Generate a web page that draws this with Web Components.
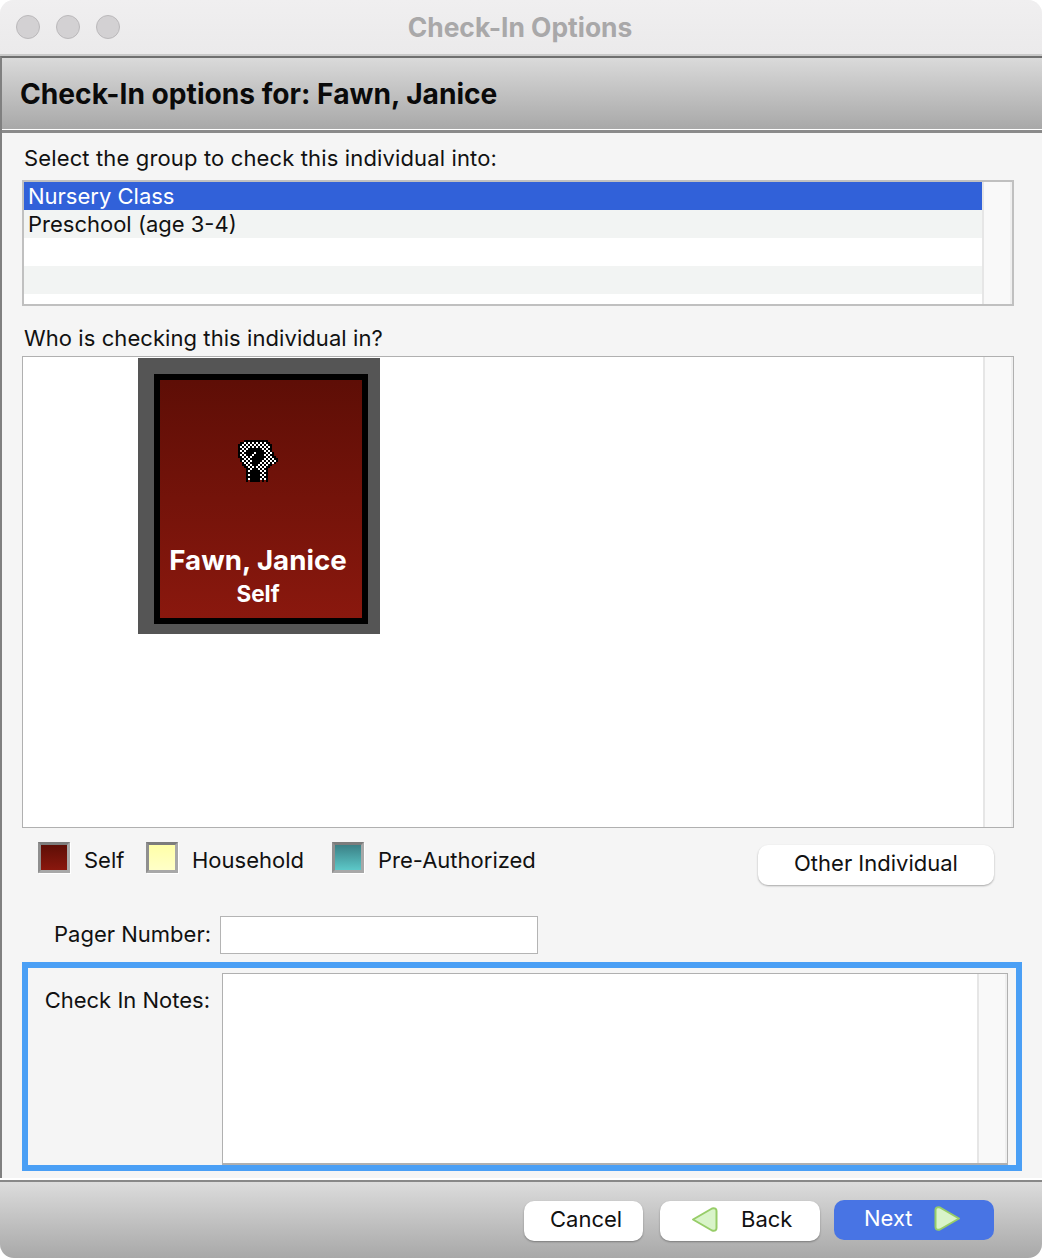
<!DOCTYPE html>
<html><head><meta charset="utf-8"><style>
html,body{margin:0;background:#fff;}
body{font-family:Inter,"Liberation Sans",sans-serif;font-size:22px;color:#111;}
</style></head><body>
<app-window>
  <title-bar slot="title">Check-In Options</title-bar>
  <head-band slot="head">Check-In options for: Fawn, Janice</head-band>
  <field-label style="margin-top:12px;letter-spacing:.14px">Select the group to check this individual into:</field-label>
  <group-list style="margin-top:9px">
    <list-row selected>Nursery Class</list-row>
    <list-row alt>Preschool (age 3-4)</list-row>
    <list-row></list-row>
    <list-row alt></list-row>
  </group-list>
  <field-label style="margin-top:19px;letter-spacing:.07px">Who is checking this individual in?</field-label>
  <scroll-box style="margin-top:5px;height:472px">
    <person-card name="Fawn, Janice" relation="Self"></person-card>
  </scroll-box>
  <legend-row style="margin-top:14px">
    <legend-item style="--a:#5e0e06;--b:#8a180e">Self</legend-item>
    <legend-item style="--a:#ffffa8;--b:#ffffc8">Household</legend-item>
    <legend-item style="--a:#3b8086;--b:#5cc8c8">Pre-Authorized</legend-item>
    <mac-button slot="action" style="width:236px;margin-top:3px">Other Individual</mac-button>
  </legend-row>
  <pager-row style="margin-top:31px">Pager Number:</pager-row>
  <notes-box>Check In Notes:</notes-box>
  <foot-bar slot="foot">
    <mac-button style="width:119px;margin-top:1px;--pl:26px;--jc:flex-start">Cancel</mac-button>
    <mac-button style="width:160px;margin-top:1px;margin-left:17px;--pl:31px;--jc:flex-start" arrow="left">Back</mac-button>
    <mac-button style="width:160px;margin-left:14px;--pl:30px;--jc:flex-start;--gap:20px" arrow="right" primary>Next</mac-button>
  </foot-bar>
</app-window>
<script>
function def(name, css, html, init){
  customElements.define(name, class extends HTMLElement{
    constructor(){super();this.attachShadow({mode:'open'}).innerHTML='<style>'+css+'</style>'+html;}
    connectedCallback(){ if(init) init(this, this.shadowRoot); }
  });
}
const SB='flex:none;width:30px;box-sizing:border-box;background:#f9f9f9;border-left:2px solid #e6e6e6;border-right:2px solid #efefef;';
def('app-window',
 `:host{display:flex;flex-direction:column;width:1042px;height:1258px;border-radius:14px;overflow:hidden;background:#f5f5f5;}
  .body{flex:1;display:flex;flex-direction:column;padding:0 28px 0 20px;border-left:2px solid #808080;min-height:0;}`,
 `<slot name="title"></slot><slot name="head"></slot><div class="body"><slot></slot></div><slot name="foot"></slot>`);
def('title-bar',
 `:host{display:flex;align-items:center;position:relative;height:54px;flex:none;background:linear-gradient(#f0eff0,#ebeaeb);border-bottom:2px solid #c9c9c9;box-sizing:content-box;}
  .dots{display:flex;gap:16px;padding-left:16px;}
  i{display:block;width:24px;height:24px;box-sizing:border-box;border-radius:50%;background:#d3d1d3;border:1px solid #bbb9bb;}
  .t{position:absolute;left:0;right:2px;top:11px;text-align:center;font-weight:700;font-size:26.4px;line-height:32px;color:#a9a8a9;}`,
 `<div class="dots"><i></i><i></i><i></i></div><div class="t"><slot></slot></div>`);
def('head-band',
 `:host{display:block;flex:none;box-sizing:border-box;height:77px;border-top:2px solid #6f6f6f;border-left:2px solid #808080;background:linear-gradient(#dadada 0,#a8a8a8 71px,#fff 71px,#fff 72px,#8a8a8a 72px);}
  .t{padding:16px 0 0 18px;font-weight:700;font-size:28.15px;line-height:40px;color:#0a0a0a;}`,
 `<div class="t"><slot></slot></div>`);
def('field-label',
 `:host{display:block;line-height:26px;font-size:22px;margin-left:2px;}`,
 `<slot></slot>`);
def('group-list',
 `:host{display:flex;height:126px;box-sizing:border-box;border:2px solid #c0c0c0;background:#fff;overflow:hidden;}
  .rows{flex:1;}
  .sb{${SB}}`,
 `<div class="rows"><slot></slot></div><div class="sb"></div>`);
def('list-row',
 `:host{display:block;height:28px;line-height:28px;padding-left:4px;font-size:22px;background:#fff;color:#111;}
  :host([alt]){background:#f2f4f3;}
  :host([selected]){background:#3161d9;color:#fff;}`,
 `<slot></slot>`);
def('scroll-box',
 `:host{display:flex;box-sizing:border-box;border:1px solid #b0b0b0;background:#fff;overflow:hidden;}
  .v{flex:1;padding:1px 0 0 115px;}
  .sb{${SB}}`,
 `<div class="v"><slot></slot></div><div class="sb"></div>`);
def('pixel-icon',
 `:host{display:block;width:44px;height:48px;} svg{display:block}`,
 `<svg width="44" height="48" viewBox="0 0 22 24" shape-rendering="crispEdges"></svg>`,
 (el,root)=>{
  const bounds={1:[4,15],2:[2,16],3:[1,17],4:[1,17],5:[1,17],6:[1,17],7:[1,18],8:[1,18],9:[1,19],10:[2,20],11:[2,20],12:[3,19],13:[3,17],14:[4,16],15:[5,15],16:[5,15],17:[5,15],18:[5,15],19:[5,15],20:[5,15],21:[4,15]};
  const q={5:[[6,12]],6:[[5,13]],7:[[5,7],[10,13]],8:[[5,7],[10,13]],9:[[9,13]],10:[[8,12]],11:[[8,11]],12:[[8,10]],13:[[8,10]],15:[[8,10]],16:[[7,11]],17:[[7,11]],18:[[7,11]],19:[[7,11]],20:[[7,11]]};
  let s='';
  for(const r in bounds){
    const [L,R]=bounds[r], y=+r;
    for(let x=L;x<=R;x++){
      if(y===21&&(x<7||x>11)&&(x%2===0)) continue;
      const edge=x===L||x===R||y===1||y===21;
      const inQ=(q[y]||[]).some(([a,b])=>x>=a&&x<=b);
      const white=!edge&&!inQ&&((x+y)%2===0);
      s+=`<rect x="${x}" y="${y}" width="1" height="1" fill="${white?'#fff':'#000'}"/>`;
    }
  }
  root.querySelector('svg').innerHTML=s;
 });
def('person-card',
 `:host{display:block;box-sizing:border-box;width:242px;height:276px;padding:16px 12px 10px 16px;background:#555;}
  .c{box-sizing:border-box;height:250px;border:6px solid #000;background:linear-gradient(#5e0e06,#8a180e);display:flex;flex-direction:column;align-items:center;padding:58px 6px 0 0;color:#fff;font-weight:700;}
  .n{margin-top:56px;font-size:27.7px;line-height:36px;white-space:nowrap;}
  .r{font-size:22.5px;line-height:30px;margin-top:1px;}`,
 `<div class="c"><pixel-icon></pixel-icon><div class="n"></div><div class="r"></div></div>`,
 (el,root)=>{root.querySelector('.n').textContent=el.getAttribute('name');root.querySelector('.r').textContent=el.getAttribute('relation');});
def('legend-row',
 `:host{display:flex;height:43px;padding-left:16px;}
  .g{display:grid;grid-template-columns:108px 186px auto;align-items:start;}
  .a{margin-left:auto;margin-right:20px;}`,
 `<div class="g"><slot></slot></div><div class="a"><slot name="action"></slot></div>`);
def('legend-item',
 `:host{display:flex;align-items:flex-start;gap:14px;line-height:36px;font-size:22px;white-space:nowrap;}
  i{display:block;box-sizing:border-box;width:32px;height:31px;border:3px solid #a8a8a8;border-top-color:#7c7c7c;border-left-color:#8f8f8f;background:linear-gradient(var(--a),var(--b));box-shadow:1px 1px 0 #fff;}`,
 `<i></i><span><slot></slot></span>`);
def('mac-button',
 `:host{display:block;box-sizing:border-box;height:40px;border-radius:10px;background:#fff;box-shadow:0 1px 2px rgba(0,0,0,.32);color:#111;font-size:22px;}
  :host([primary]){background:#4874e4;color:#fff;box-shadow:none;}
  .b{box-sizing:border-box;height:100%;display:flex;align-items:center;justify-content:var(--jc,center);gap:var(--gap,22px);padding:0 0 4px var(--pl,0);line-height:1;white-space:nowrap;}
  svg{flex:none;display:none}
  svg.on{display:block}`,
 `<div class="b"><svg class="l" width="28" height="27" viewBox="0 0 28 27"><path d="M2 13.5 L21 2.5 Q25.5 1.5 25.5 5 V22 Q25.5 25.5 21 24.5 Z" fill="#d9f4c9" stroke="#97cd68" stroke-width="2" stroke-linejoin="round"/></svg><span><slot></slot></span><svg class="r" width="28" height="27" viewBox="0 0 28 27"><path d="M26 13.5 L7 2.5 Q2.5 1.5 2.5 5 V22 Q2.5 25.5 7 24.5 Z" fill="#d9f4c9" stroke="#97cd68" stroke-width="2" stroke-linejoin="round"/></svg></div>`,
 (el,root)=>{const a=el.getAttribute('arrow'); if(a==='left')root.querySelector('.l').classList.add('on'); if(a==='right')root.querySelector('.r').classList.add('on');});
def('pager-row',
 `:host{display:flex;align-items:center;height:38px;font-size:22px;}
  .l{width:189px;text-align:right;margin-right:9px;padding-bottom:2px;white-space:nowrap;}
  .i{box-sizing:border-box;width:318px;height:38px;background:#fff;border:1px solid #b4b4b4;}`,
 `<div class="l"><slot></slot></div><div class="i"></div>`);
def('notes-box',
 `:host{display:flex;box-sizing:border-box;width:1000px;height:209px;margin-top:8px;border:6px solid #4a9ff5;padding:5px 8px 0 0;background:#f5f5f5;font-size:22px;}
  .l{width:182px;text-align:right;margin-right:12px;line-height:26px;padding-top:14px;white-space:nowrap;box-sizing:border-box;}
  .t{flex:1;display:flex;border:1px solid #b0b0b0;border-bottom-width:2px;background:#fff;}
  .a{flex:1}
  .sb{${SB}}`,
 `<div class="l"><slot></slot></div><div class="t"><div class="a"></div><div class="sb"></div></div>`);
def('foot-bar',
 `:host{display:block;flex:none;height:80px;box-sizing:border-box;border-top:2px solid #fff;}
  .g{box-sizing:border-box;height:78px;border-top:2px solid #888;background:linear-gradient(#dcdcdc,#a8a8a8);display:flex;align-items:flex-start;justify-content:flex-end;padding:18px 48px 0 0;}`,
 `<div class="g"><slot></slot></div>`);
</script>
</body></html>
